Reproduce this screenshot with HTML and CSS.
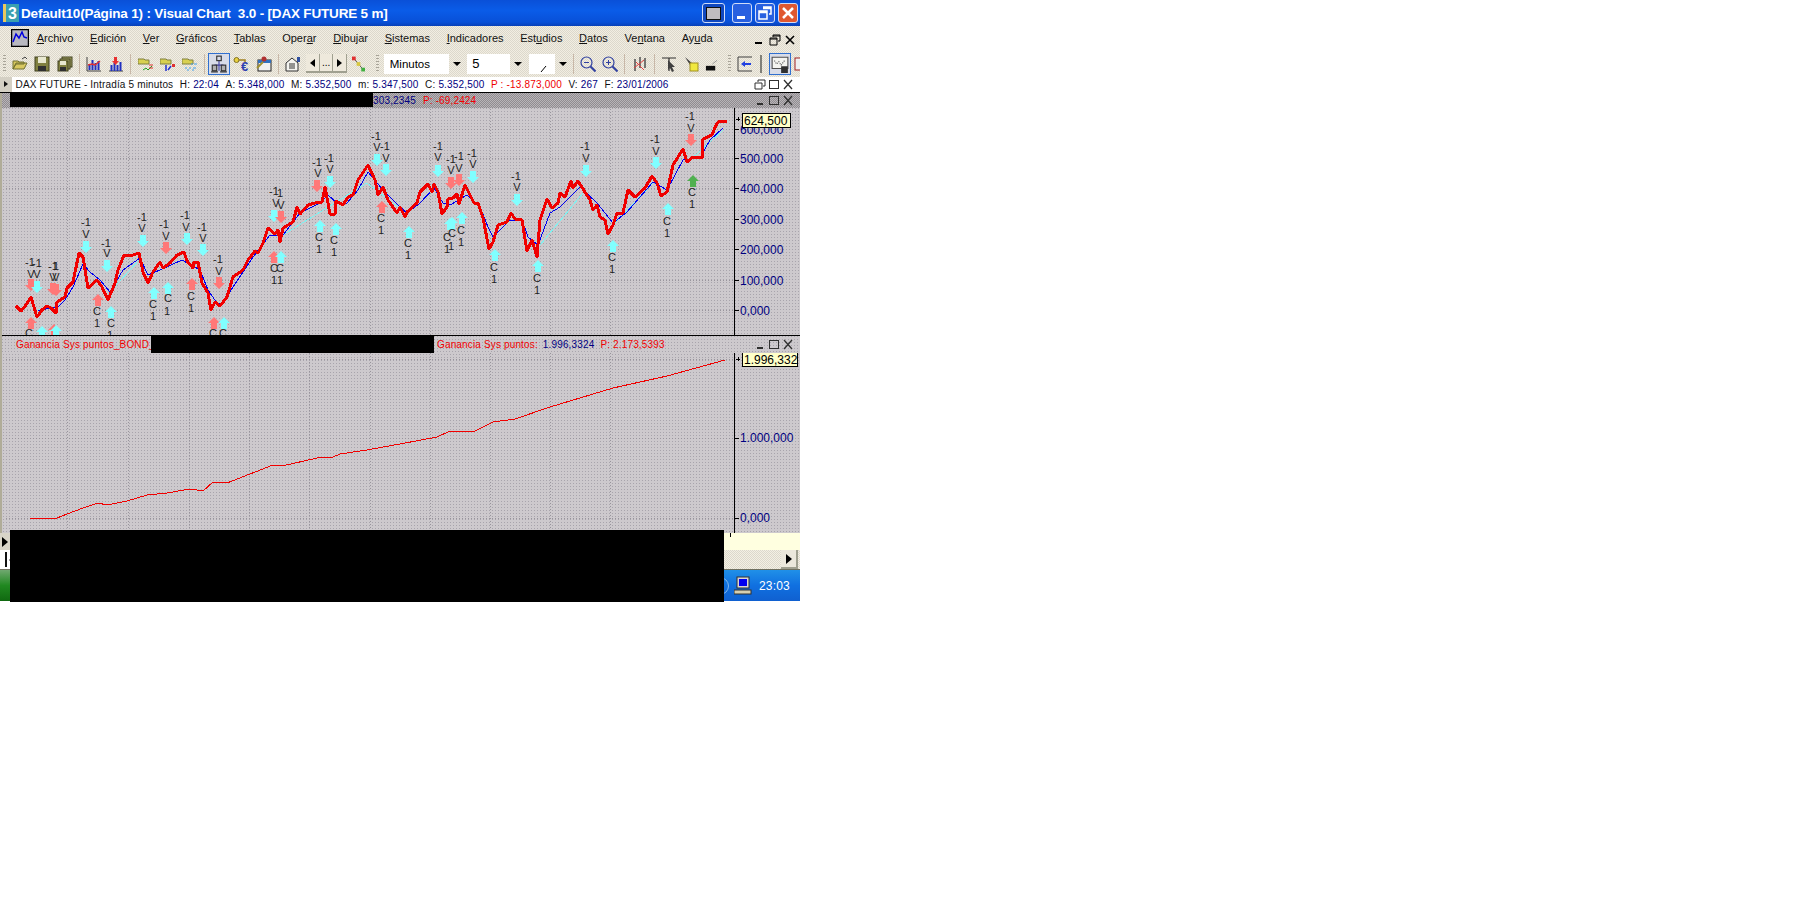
FILE: index.html
```html
<!DOCTYPE html>
<html lang="es">
<head>
<meta charset="utf-8">
<title>Visual Chart</title>
<link rel="stylesheet" href="styles.css">
</head>
<body>
<div class="app">
  <header class="titlebar">
    <svg class="appicon" width="18" height="20" viewBox="0 0 18 20"><rect x="1" y="1" width="16" height="18" fill="#3aa0b0"/><path d="M1 1h3v18H1z" fill="#e8c860"/><text x="6" y="16" class="appnum">3</text></svg>
    <span class="titletext">Default10(Página 1) : Visual Chart  3.0 - [DAX FUTURE 5 m]</span>
    <div class="winbtns">
      <span class="winbtn extra"><i class="extra-in"></i></span>
      <span class="winbtn"><svg width="20" height="20" viewBox="0 0 20 20"><rect x="5" y="13" width="8" height="3" fill="#fff"/></svg></span>
      <span class="winbtn"><svg width="20" height="20" viewBox="0 0 20 20"><path d="M8 4h8v7h-2M4 8h8v8H4zM4 9.500h8M8 5.500h8" fill="none" stroke="#fff" stroke-width="1.500"/></svg></span>
      <span class="winbtn close"><svg width="20" height="20" viewBox="0 0 20 20"><path d="M5 5l10 10M15 5L5 15" stroke="#fff" stroke-width="2.500"/></svg></span>
    </div>
  </header>

  <nav class="menubar">
    <svg class="docicon" width="18" height="18" viewBox="0 0 18 18"><rect x="0.500" y="0.500" width="17" height="17" fill="#b8b8c0" stroke="#000" stroke-width="1.500"/><path d="M2 13l3-8 3 4 3-6 2 5 3 1" fill="none" stroke="#0000e0" stroke-width="1.500"/></svg>
    <span class="mi"><u>A</u>rchivo</span>
    <span class="mi"><u>E</u>dición</span>
    <span class="mi"><u>V</u>er</span>
    <span class="mi"><u>G</u>ráficos</span>
    <span class="mi"><u>T</u>ablas</span>
    <span class="mi">Oper<u>a</u>r</span>
    <span class="mi"><u>D</u>ibujar</span>
    <span class="mi"><u>S</u>istemas</span>
    <span class="mi"><u>I</u>ndicadores</span>
    <span class="mi">Est<u>u</u>dios</span>
    <span class="mi"><u>D</u>atos</span>
    <span class="mi">Ve<u>n</u>tana</span>
    <span class="mi">Ay<u>u</u>da</span>
    <div class="mdibtns">
      <svg width="12" height="12" viewBox="0 0 12 12"><rect x="1" y="8" width="7" height="2"/></svg>
      <svg width="12" height="12" viewBox="0 0 12 12"><path d="M4 3V1h7v6H9M1 4h7v7H1zM1 5h7M4 2h7" fill="none" stroke="#000"/></svg>
      <svg width="12" height="12" viewBox="0 0 12 12"><path d="M2 2l8 8M10 2l-8 8" stroke="#000" stroke-width="1.600"/></svg>
    </div>
  </nav>

  <div class="toolbar">
    <i class="grip"></i>
    <svg class="ti" viewBox="0 0 16 16"><path d="M1 13V5h5l1 1h5v2H4l-3 5zM1 13l3-6h11l-3 6z" fill="#d8c860" stroke="#707030"/><path d="M10 3l3-2 2 2" fill="none" stroke="#404040"/></svg>
    <svg class="ti" viewBox="0 0 16 16"><rect x="1" y="1" width="14" height="14" fill="#808040" stroke="#404020"/><rect x="4" y="1" width="8" height="6" fill="#e8e8d0"/><rect x="4" y="10" width="8" height="5" fill="#303030"/></svg>
    <svg class="ti" viewBox="0 0 16 16"><rect x="5" y="1" width="10" height="10" fill="#a0a060" stroke="#404020"/><rect x="3" y="3" width="10" height="10" fill="#a0a060" stroke="#404020"/><rect x="1" y="5" width="10" height="10" fill="#808040" stroke="#404020"/><rect x="3" y="5" width="6" height="4" fill="#e8e8d0"/><rect x="3" y="11" width="6" height="4" fill="#303030"/></svg>
    <i class="sep"></i>
    <svg class="ti" viewBox="0 0 16 16"><path d="M1 1v14h14" fill="none" stroke="#404040"/><path d="M3.500 8v6M6.500 4v10M9.500 7v7M12.500 5v9" stroke="#2030c0" stroke-width="2"/><path d="M2 9l4-1 3 1 5-4" fill="none" stroke="#e03030" stroke-width="1.500"/></svg>
    <svg class="ti" viewBox="0 0 16 16"><path d="M1 15h14" stroke="#404040"/><path d="M3.500 9v6M6.500 7v8M9.500 9v6M12.500 6v9" stroke="#2030c0" stroke-width="2"/><path d="M6 1h3v4h2L7.500 9 4 5h2z" fill="#e83030"/></svg>
    <i class="sep"></i>
    <svg class="ti" viewBox="0 0 16 16"><path d="M0 3h6l1 1h4v4H0z" fill="#d8d050" stroke="#808040"/><path d="M5 14l3-2 2 2 4-4" fill="none" stroke="#20a020"/><path d="M11 9h4M11 12h4" stroke="#e03030"/></svg>
    <svg class="ti" viewBox="0 0 16 16"><path d="M0 3h6l1 1h4v4H0z" fill="#d8d050" stroke="#808040"/><path d="M6 9v6M11 10l-3 4" stroke="#2030d0" stroke-width="1.500"/><path d="M12 8h3v3h-3z" fill="#e03030"/></svg>
    <svg class="ti" viewBox="0 0 16 16"><path d="M0 3h6l1 1h4v4H0z" fill="#d8d050" stroke="#808040"/><path d="M3 12h2M7 12h2M11 12h3M9 8h2M12 8h3M5 14h2M10 14h2" stroke="#40a0f0"/></svg>
    <i class="sep"></i>
    <span class="tactive"><svg class="ti" viewBox="0 0 16 16"><path d="M8 5v9M4 9v4M12 9v4M4 9h8" stroke="#4040a0" fill="none"/><rect x="6" y="1" width="4" height="4" fill="none" stroke="#303030"/><rect x="2" y="9" width="4" height="5" fill="#b0b0b0" stroke="#303030"/><rect x="10" y="9" width="4" height="5" fill="#b0b0b0" stroke="#303030"/><path d="M1 15h6M9 15h6" stroke="#303030"/></svg></span>
    <svg class="ti" viewBox="0 0 16 16"><circle cx="3.500" cy="4" r="2.500" fill="#e8d040" stroke="#807020"/><path d="M6 4h6v2" stroke="#a08020" fill="none" stroke-width="1.500"/><text x="8" y="15" class="euro">€</text></svg>
    <svg class="ti" viewBox="0 0 16 16"><rect x="2" y="4" width="13" height="11" fill="#f0f0f0" stroke="#202020"/><rect x="2" y="4" width="13" height="3" fill="#3070c0"/><circle cx="8" cy="3" r="2.500" fill="#b03030"/><path d="M1 12l6-6" stroke="#a09030" stroke-width="2"/></svg>
    <i class="sep"></i>
    <svg class="ti" viewBox="0 0 16 16"><path d="M1 7l6-5 6 5v8H1z" fill="#f4f4f0" stroke="#303030"/><path d="M4 8h6M4 10h6M4 12h6" stroke="#303030"/><path d="M12 1h3v5h-3z" fill="#3050a0"/></svg>
    <div class="navgroup"><span class="navb"><i class="tri-l"></i></span><span class="navb mid">...</span><span class="navb"><i class="tri-r"></i></span></div>
    <svg class="ti small" viewBox="0 0 14 16"><path d="M2 2l10 12" stroke="#505050"/><rect x="0" y="0" width="4" height="4" fill="#e03030"/><rect x="5" y="6" width="4" height="4" fill="#d8c840"/><rect x="10" y="12" width="4" height="4" fill="#40b040"/></svg>
    <i class="grip late"></i>
    <div class="combo wide"><span>Minutos</span></div><i class="drop"></i>
    <div class="combo mid5"><span>5</span></div><i class="drop"></i>
    <div class="combo line"><svg width="10" height="10" viewBox="0 0 10 10"><path d="M1 9l5-6" stroke="#000"/></svg></div><i class="drop"></i>
    <i class="sep"></i>
    <svg class="ti" viewBox="0 0 16 16"><circle cx="6.500" cy="6.500" r="5.500" fill="none" stroke="#3040a0" stroke-width="1.200"/><path d="M4 6.500h5" stroke="#3040a0"/><path d="M10.500 10.500l5 5" stroke="#3040a0" stroke-width="2"/></svg>
    <svg class="ti" viewBox="0 0 16 16"><circle cx="6.500" cy="6.500" r="5.500" fill="none" stroke="#3040a0" stroke-width="1.200"/><path d="M4 6.500h5M6.500 4v5" stroke="#3040a0"/><path d="M10.500 10.500l5 5" stroke="#3040a0" stroke-width="2"/></svg>
    <i class="sep"></i>
    <svg class="ti" viewBox="0 0 16 16"><path d="M3 3v12M8 1v11M13 2v10" stroke="#505050" stroke-width="1.500"/><path d="M2 12l10-8M4 6l8 8" stroke="#e04040"/></svg>
    <i class="sep"></i>
    <svg class="ti" viewBox="0 0 16 16"><path d="M1 2h14M8 2v13" stroke="#303030" stroke-width="1.200"/><path d="M7 4l7 7-3 0 2 4-2 1-2-4-2 2z" fill="#404040"/></svg>
    <svg class="ti" viewBox="0 0 16 16"><path d="M2 1l8 7-3 1z" fill="#404040"/><rect x="7" y="7" width="8" height="8" fill="#f0e840" stroke="#a09020"/></svg>
    <svg class="ti small" viewBox="0 0 14 16"><rect x="1" y="10" width="10" height="5" fill="#101010"/><path d="M8 8l5-4" stroke="#909090"/></svg>
    <i class="grip short"></i>
    <svg class="ti" viewBox="0 0 16 16"><path d="M15 1H1v14h14" fill="none" stroke="#404040"/><path d="M4 8l4-3v2h6v2H8v2z" fill="#2040e0"/></svg>
    <i class="vbar"></i>
    <span class="tactive late-active"><svg class="ti" viewBox="0 0 16 16"><path d="M1 2h14v10H1z" fill="#f4f4f0" stroke="#505050"/><path d="M3 5l2 3 2-2 2 3 3-4" fill="none" stroke="#606060" stroke-dasharray="1 1"/><rect x="9" y="10" width="6" height="6" fill="#303030"/></svg></span>
    <svg class="ti cut" viewBox="0 0 16 16"><rect x="1" y="2" width="14" height="12" fill="#f0f0f0" stroke="#a02020"/></svg>
  </div>

  <div class="infobar">
    <span class="infotri"></span>
    <span class="in-name">DAX FUTURE - Intradía 5 minutos</span>
    <span>H: <b>22:04</b></span>
    <span>A: <b>5.348,000</b></span>
    <span>M: <b>5.352,500</b></span>
    <span>m: <b>5.347,500</b></span>
    <span>C: <b>5.352,500</b></span>
    <span class="red">P : -13.873,000</span>
    <span>V: <b>267</b></span>
    <span>F: <b>23/01/2006</b></span>
    <div class="panelbtns first">
      <svg width="12" height="11" viewBox="0 0 12 11"><path d="M4 3V1h7v6H9M1 4h7v6H1z" fill="none" stroke="#303030"/></svg>
      <svg width="12" height="11" viewBox="0 0 12 11"><rect x="1.500" y="1.500" width="9" height="8" fill="none" stroke="#303030"/></svg>
      <svg width="12" height="11" viewBox="0 0 12 11"><path d="M2 1l8 9M10 1l-8 9" stroke="#303030" stroke-width="1.300"/></svg>
    </div>
  </div>

  <section class="panel">
    <div class="panelhead dark">
      <span class="ph-a navy">303,2345</span><span class="red">P: -69,2424</span>
      <div class="panelbtns">
        <svg width="12" height="11" viewBox="0 0 12 11"><rect x="3" y="8" width="6" height="2" fill="#303030"/></svg>
        <svg width="12" height="11" viewBox="0 0 12 11"><rect x="1.500" y="1.500" width="9" height="8" fill="none" stroke="#303030"/></svg>
        <svg width="12" height="11" viewBox="0 0 12 11"><path d="M2 1l8 9M10 1l-8 9" stroke="#303030" stroke-width="1.300"/></svg>
      </div>
    </div>
    <svg class="chart c1" width="798" height="227" viewBox="2 108 798 227">
      <defs>
        <pattern id="dots" width="3" height="3" patternUnits="userSpaceOnUse"><rect width="3" height="3" fill="#cdc9cd"/><rect width="1" height="1" fill="#a8a4ac"/></pattern>
        <path id="up" d="M0-6 6 0H3V6H-3V0H-6Z"/>
        <path id="dn" d="M0 6 6 0H3V-6H-3V0H-6Z"/>
      </defs>
      <rect x="2" y="108" width="798" height="227" fill="url(#dots)"/>
      <path class="grid" d="M67 109V335M128 109V335M189 109V335M249 109V335M309 109V335M370 109V335M430 109V335M490 109V335M550 109V335M610 109V335M6 129H734M6 158H734M6 188H734M6 219H734M6 249H734M6 280H734M6 310H734"/>
      <path class="axis" d="M734 108V335M734 129H739M734 158H739M734 188H739M734 219H739M734 249H739M734 280H739M734 310H739"/>
      <g class="ax">
        <text x="740" y="134">600,000</text><text x="740" y="163">500,000</text><text x="740" y="193">400,000</text><text x="740" y="224">300,000</text><text x="740" y="254">200,000</text><text x="740" y="285">100,000</text><text x="740" y="315">0,000</text>
      </g>
      <path class="cy-line" d="M38 310L55 307M110 292L140 259M283 235L367 183 398 207M540 245L583 193M613 225L653 183M687 163L723 130"/>
      <polyline class="bl-line" points="38,311 50,308 58,307 65,300 73,287 83,264 90,272 100,280 110,292 123,270 140,258 148,275 160,270 182,260 200,270 208,290 217,303 223,303 233,287 253,257 270,235 283,235 300,213 320,203 328,195 337,203 347,203 358,190 368,172 383,190 400,207 407,213 420,203 434,188 443,203 450,205 467,195 480,207 488,227 493,237 510,220 522,220 528,237 538,245 550,213 560,207 580,187 597,203 613,223 627,212 653,182 667,190 683,160 700,158 710,140 723,128"/>
      <polyline class="rd-line" points="16,306 21,311 26,305 31,297 37,317 42,310 47,306 51,308 56,313 57,302 65,297 67,288 73,282 79,253 83,257 88,288 97,280 102,287 108,300 115,283 118,270 124,255 133,255 139,253 143,272 148,283 153,272 160,262 163,268 170,263 177,255 184,252 187,261 193,268 194,262 198,262 202,283 208,293 211,310 215,302 220,306 227,297 233,277 243,270 248,260 255,251 258,253 263,243 268,228 275,234 278,230 280,242 283,228 293,222 297,207 300,214 308,205 315,203 322,202 325,187 330,214 335,214 336,201 343,205 348,197 353,195 358,180 368,165 375,180 378,195 383,187 388,200 397,213 400,207 405,217 407,212 417,203 420,192 428,184 432,192 434,184 438,192 442,214 447,207 448,199 453,198 457,194 459,204 465,185 474,203 478,203 483,218 489,249 493,242 498,225 507,222 511,213 515,219 522,220 527,251 532,240 537,257 540,220 547,199 552,208 558,203 560,193 565,197 571,181 573,188 578,181 590,200 593,210 597,205 600,217 605,220 608,234 613,225 617,213 623,213 628,190 635,197 645,188 652,176 657,183 661,196 667,192 673,165 683,149 687,162 693,157 702,158 703,139 712,135 717,123 720,121 727,121"/>
      <g class="sig">
        <use href="#dn" x="31" y="285" class="pk"/><text x="30" y="266">-1</text><text x="31" y="278">V</text>
        <use href="#dn" x="37" y="287" class="cy"/><text x="37" y="267">-1</text><text x="37" y="278">V</text>
        <use href="#dn" x="53" y="289" class="pk"/><use href="#dn" x="56" y="290" class="pk"/><text x="53" y="270">-1</text><text x="56" y="270">1</text><text x="53" y="281">V</text><text x="56" y="281">V</text>
        <use href="#dn" x="86" y="247" class="cy"/><text x="86" y="226">-1</text><text x="86" y="238">V</text>
        <use href="#dn" x="107" y="266" class="cy"/><text x="106" y="247">-1</text><text x="107" y="257">V</text>
        <use href="#dn" x="143" y="241" class="cy"/><text x="142" y="221">-1</text><text x="142" y="232">V</text>
        <use href="#dn" x="166" y="248" class="pk"/><text x="164" y="228">-1</text><text x="166" y="240">V</text>
        <use href="#dn" x="187" y="239" class="cy"/><text x="185" y="219">-1</text><text x="186" y="231">V</text>
        <use href="#dn" x="203" y="250" class="cy"/><text x="202" y="231">-1</text><text x="203" y="242">V</text>
        <use href="#dn" x="219" y="283" class="pk"/><text x="218" y="263">-1</text><text x="219" y="275">V</text>
        <use href="#dn" x="274" y="216" class="cy"/><text x="274" y="195">-1</text><text x="276" y="207">V</text>
        <use href="#dn" x="281" y="217" class="pk"/><text x="280" y="197">1</text><text x="281" y="209">V</text>
        <use href="#dn" x="317" y="186" class="pk"/><text x="317" y="166">-1</text><text x="318" y="177">V</text>
        <use href="#dn" x="330" y="182" class="cy"/><text x="329" y="162">-1</text><text x="330" y="173">V</text>
        <use href="#dn" x="377" y="160" class="cy"/><text x="376" y="140">-1</text><text x="377" y="151">V</text>
        <use href="#dn" x="386" y="170" class="cy"/><text x="385" y="150">-1</text><text x="386" y="162">V</text>
        <use href="#dn" x="438" y="171" class="cy"/><text x="438" y="150">-1</text><text x="438" y="161">V</text>
        <use href="#dn" x="451" y="183" class="pk"/><text x="451" y="163">-1</text><text x="451" y="174">V</text>
        <use href="#dn" x="459" y="180" class="pk"/><text x="459" y="160">-1</text><text x="459" y="172">V</text>
        <use href="#dn" x="473" y="177" class="cy"/><text x="472" y="157">-1</text><text x="473" y="168">V</text>
        <use href="#dn" x="517" y="200" class="cy"/><text x="516" y="180">-1</text><text x="517" y="191">V</text>
        <use href="#dn" x="586" y="171" class="cy"/><text x="585" y="150">-1</text><text x="586" y="162">V</text>
        <use href="#dn" x="656" y="163" class="cy"/><text x="655" y="143">-1</text><text x="656" y="155">V</text>
        <use href="#dn" x="691" y="140" class="pk"/><text x="690" y="120">-1</text><text x="691" y="132">V</text>

        <use href="#up" x="31" y="323" class="pk"/><text x="29" y="337">C</text>
        <use href="#up" x="42" y="332" class="cy"/>
        <use href="#up" x="54" y="330" class="pk"/><use href="#up" x="56" y="331" class="cy"/>
        <use href="#up" x="98" y="300" class="pk"/><text x="97" y="315">C</text><text x="97" y="327">1</text>
        <use href="#up" x="111" y="312" class="cy"/><text x="111" y="327">C</text><text x="110" y="339">1</text>
        <use href="#up" x="154" y="293" class="cy"/><text x="153" y="308">C</text><text x="153" y="320">1</text>
        <use href="#up" x="168" y="288" class="cy"/><text x="168" y="302">C</text><text x="167" y="315">1</text>
        <use href="#up" x="192" y="284" class="pk"/><text x="191" y="300">C</text><text x="191" y="312">1</text>
        <use href="#up" x="214" y="323" class="pk"/><text x="213" y="337">C</text>
        <use href="#up" x="224" y="323" class="cy"/><text x="223" y="337">C</text>
        <use href="#up" x="274" y="257" class="pk"/><text x="274" y="272">C</text><text x="274" y="284">1</text>
        <use href="#up" x="281" y="257" class="cy"/><text x="280" y="272">C</text><text x="280" y="284">1</text>
        <use href="#up" x="320" y="226" class="cy"/><text x="319" y="241">C</text><text x="319" y="253">1</text>
        <use href="#up" x="336" y="229" class="cy"/><text x="334" y="244">C</text><text x="334" y="256">1</text>
        <use href="#up" x="382" y="207" class="pk"/><text x="381" y="222">C</text><text x="381" y="234">1</text>
        <use href="#up" x="409" y="232" class="cy"/><text x="408" y="247">C</text><text x="408" y="259">1</text>
        <use href="#up" x="450" y="224" class="cy"/><text x="447" y="241">C</text><text x="447" y="253">1</text>
        <use href="#up" x="452" y="223" class="cy"/><text x="452" y="237">C</text><text x="451" y="250">1</text>
        <use href="#up" x="462" y="218" class="cy"/><text x="461" y="234">C</text><text x="461" y="246">1</text>
        <use href="#up" x="495" y="255" class="cy"/><text x="494" y="271">C</text><text x="494" y="283">1</text>
        <use href="#up" x="538" y="266" class="cy"/><text x="537" y="282">C</text><text x="537" y="294">1</text>
        <use href="#up" x="613" y="246" class="cy"/><text x="612" y="261">C</text><text x="612" y="273">1</text>
        <use href="#up" x="668" y="209" class="cy"/><text x="667" y="225">C</text><text x="667" y="237">1</text>
        <use href="#up" x="693" y="181" class="gr"/><text x="692" y="196">C</text><text x="692" y="208">1</text>
      </g>
      <path class="axis" d="M736 119h4M738 117v4"/>
      <rect class="tip" x="742.500" y="113.500" width="48" height="14"/>
      <text class="tiptext" x="744" y="125">624,500</text>
    </svg>
  </section>

  <section class="panel">
    <div class="panelhead light">
      <span class="red ph-b">Ganancia Sys puntos_BOND_</span>
      <span class="red ph-c">Ganancia Sys puntos:</span><span class="navy ph-d">1.996,3324</span><span class="red">P: 2.173,5393</span>
      <div class="panelbtns">
        <svg width="12" height="11" viewBox="0 0 12 11"><rect x="3" y="8" width="6" height="2" fill="#303030"/></svg>
        <svg width="12" height="11" viewBox="0 0 12 11"><rect x="1.500" y="1.500" width="9" height="8" fill="none" stroke="#303030"/></svg>
        <svg width="12" height="11" viewBox="0 0 12 11"><path d="M2 1l8 9M10 1l-8 9" stroke="#303030" stroke-width="1.300"/></svg>
      </div>
    </div>
    <svg class="chart c2" width="798" height="180" viewBox="2 353 798 180">
      <rect x="2" y="353" width="798" height="180" fill="url(#dots)"/>
      <path class="grid" d="M67 353V533M128 353V533M189 353V533M249 353V533M309 353V533M370 353V533M430 353V533M490 353V533M550 353V533M610 353V533M6 359H734M6 438H734M6 518H734"/>
      <path class="axis" d="M734 353V533M734 438H739M734 518H739"/>
      <g class="ax">
        <text x="740" y="442">1.000,000</text><text x="740" y="522">0,000</text>
      </g>
      <polyline class="rd-thin" points="30,518 35,519 40,518 57,518 67,514 83,508 98,503 107,505 127,501 147,495 167,493 190,489 203,491 213,482 227,483 250,474 273,465 282,466 317,458 333,457 340,454 367,450 383,447 400,444 437,437 448,432 458,431 473,432 493,422 515,419 550,407 613,388 667,376 725,360"/>
      <path class="axis" d="M736 359h4M738 357v4"/>
      <rect class="tip" x="742.500" y="352.500" width="55" height="14"/>
      <text class="tiptext" x="744" y="364">1.996,332</text>
    </svg>
  </section>

  <div class="yellowrow"><span class="smallbtn"><i class="tri-r big"></i></span><i class="ytick"></i></div>
  <div class="scrollrow"><span class="scr-left"><i class="vbar dark"></i><i class="tri-l"></i></span><span class="scr-track"></span><span class="scr-right"><i class="tri-r big"></i></span></div>
  <footer class="taskbar">
    <span class="startpart"></span>
    <div class="tray">
      <span class="chev">«</span>
      <svg width="18" height="20" viewBox="0 0 18 20"><rect x="3" y="1" width="12" height="11" fill="#d8d8d8" stroke="#303030"/><rect x="5" y="3" width="8" height="7" fill="#0000f0"/><rect x="0" y="14" width="17" height="4" fill="#d8d0b0" stroke="#303030"/></svg>
      <span class="clock">23:03</span>
    </div>
  </footer>

  <div class="redact r1"></div>
  <div class="redact r2"></div>
  <div class="redact r3"></div>
</div>
</body>
</html>
```

FILE: styles.css
```css
html, body { margin: 0; padding: 0; background: #fff; }
body { height: 900px; overflow: hidden; font-family: "Liberation Sans", Arial, sans-serif; }
.app { position: relative; width: 800px; height: 602px; display: flex; flex-direction: column; overflow: hidden; }

.titlebar { height: 26px; flex: none; display: flex; align-items: center; padding-left: 2px; box-sizing: border-box;
  background: linear-gradient(#0a50d8, #0a5ce8 40%, #0850d8 85%, #0840b8); color: #fff; }
.appicon { margin-right: 1px; flex: none; }
.appnum { font: bold 16px "Liberation Sans", sans-serif; fill: #fff; }
.titletext { font-weight: bold; font-size: 13.500px; letter-spacing: -.18px; white-space: pre; }
.winbtns { margin-left: auto; display: flex; gap: 3px; padding-right: 2px; }
.winbtn { width: 20px; height: 20px; border: 1px solid #d0dcf8; border-radius: 3px; background: #2860e0; display: flex; align-items: center; justify-content: center; box-sizing: border-box; }
.winbtn svg { flex: none; }
.winbtn.extra { width: 23px; margin-right: 4px; background: #1048c0; }
.extra-in { width: 13px; height: 11px; background: #c0bcc0; border: 1px solid #101010; display: block; }
.winbtn.close { background: #e05830; }

.menubar { height: 24px; flex: none; display: flex; align-items: center; padding-left: 11px; box-sizing: border-box;
  background: repeating-conic-gradient(#f2eee2 0 25%, #dcd8cc 0 50%) 0 0 / 2px 2px; font-size: 11px; color: #111; gap: 16.700px; }
.docicon { margin-right: -9px; flex: none; }
.mi { white-space: nowrap; }
.mdibtns { margin-left: auto; display: flex; gap: 3px; padding-right: 4px; margin-top: 3px; }

.toolbar { height: 27px; flex: none; display: flex; align-items: center; gap: 6.200px; padding-left: 3px; box-sizing: border-box; overflow: hidden;
  background: repeating-conic-gradient(#f2eee2 0 25%, #dcd8cc 0 50%) 0 0 / 2px 2px; }
.grip { width: 3px; height: 18px; flex: none; background: repeating-linear-gradient(#a8a498 0 1px, transparent 1px 3px); }
.grip.late { margin-left: 4px; }
.grip.short { margin-left: 3px; }
.ti { width: 16px; height: 16px; flex: none; display: block; }
.ti.small { width: 13px; }
.ti.cut { margin-left: -3px; }
.sep { width: 1px; height: 20px; flex: none; background: #c8b8a8; }
.tactive { width: 18px; height: 18px; padding: 1px; flex: none; border: 1px solid #3070d0; background: #d8dce8; margin: 0 -3px; }
.tactive .ti { width: 18px; height: 18px; }
.tactive.late-active { margin: 0; }
.navgroup { display: flex; margin: 0 -1px; }
.navb { height: 17px; width: 13px; display: flex; align-items: center; justify-content: center; font-size: 10px; line-height: 1; border-bottom: 2px solid #a0a090; border-right: 1px solid #a0a090; background: #eee9dc; }
.navb.mid { width: 12px; }
.tri-l { width: 0; height: 0; border: 4px solid transparent; border-left: 0; border-right: 5px solid #000; display: block; flex: none; }
.tri-r { width: 0; height: 0; border: 4px solid transparent; border-right: 0; border-left: 5px solid #000; display: block; flex: none; }
.tri-r.big { border-width: 5px 0 5px 6px; border-color: transparent transparent transparent #000; }
.combo { height: 20px; background: #fff; display: flex; align-items: center; flex: none; font-size: 11.500px; box-sizing: border-box; }
.combo.wide { width: 65px; padding-left: 6px; margin-left: -1px; }
.combo.mid5 { width: 43px; padding-left: 5px; font-size: 13px; }
.combo.line { width: 26px; padding: 8px 0 0 11px; }
.drop { width: 0; height: 0; flex: none; border: 4px solid transparent; border-bottom: 0; border-top: 4px solid #000; margin-left: -2px; }

.infobar { height: 16px; flex: none; display: flex; align-items: center; gap: 6.500px; background: #fff; border-bottom: 1px solid #000; box-sizing: border-box; font-size: 10px; letter-spacing: .18px; color: #111; white-space: nowrap; }
.infobar b { font-weight: normal; color: #000080; }
.infotri { width: 12px; height: 15px; margin-right: -3px; flex: none; background: #d4d0c4; position: relative; }
.infotri::after { content: ""; display: block; width: 0; height: 0; margin: 4px 0 0 4px; border: 3px solid transparent; border-right: 0; border-left: 4px solid #111; }
.in-name { letter-spacing: .16px; }
.red { color: #f00000; }
.navy { color: #000080; }
.panelbtns { margin-left: auto; display: flex; gap: 2px; padding-right: 6px; }

.panel { flex: none; display: flex; flex-direction: column; border-left: 2px solid #b0ac98; box-sizing: border-box; }
.panel svg.chart { display: block; flex: none; }
.panelhead { height: 15px; flex: none; display: flex; align-items: center; font-size: 10px; letter-spacing: .15px; white-space: nowrap; }
.panelhead.dark { background: repeating-conic-gradient(#b8b4b8 0 25%, #908c90 0 50%) 0 0 / 2px 2px; }
.panelhead.light { height: 18px; border-top: 1px solid #000; box-sizing: border-box; background: conic-gradient(at 1px 1px, #cdc9cd 75%, #a8a4ac 0) 0 0 / 3px 3px; }
.ph-a { margin-left: 371px; margin-right: 7px; }
.ph-b { margin-left: 14px; width: 421px; flex: none; }
.ph-c { margin-right: 5px; }
.ph-d { margin-right: 6px; }

.grid { fill: none; stroke: #98949c; stroke-dasharray: 1 2; stroke-width: 1; shape-rendering: crispEdges; }
.axis { fill: none; stroke: #000; stroke-width: 1; shape-rendering: crispEdges; }
.ax text { font: 12px "Liberation Sans", sans-serif; fill: #000080; }
.cy-line { fill: none; stroke: #80f0f0; stroke-width: 1; shape-rendering: crispEdges; }
.bl-line { fill: none; stroke: #0000f0; stroke-width: 1; shape-rendering: crispEdges; }
.rd-line { fill: none; stroke: #f00000; stroke-width: 3; stroke-linejoin: round; shape-rendering: crispEdges; }
.rd-thin { fill: none; stroke: #f00000; stroke-width: 1; shape-rendering: crispEdges; }
.sig text { font: 11px "Liberation Sans", sans-serif; fill: #222; text-anchor: middle; }
.cy { fill: #80ffff; }
.pk { fill: #ff7878; }
.gr { fill: #50b050; }
.tip { fill: #ffffc8; stroke: #000; stroke-width: 1; }
.tiptext { font: 12px "Liberation Sans", sans-serif; fill: #000; }
.euro { font: bold 13px "Liberation Sans", sans-serif; fill: #3040b0; }

.yellowrow { height: 17px; flex: none; display: flex; background: #ffffe0; position: relative; }
.smallbtn { width: 10px; background: #d8d4c8; display: flex; align-items: center; justify-content: center; }
.ytick { width: 1px; height: 4px; background: #000; margin-left: 720px; }
.scrollrow { height: 20px; flex: none; display: flex; background: repeating-conic-gradient(#f4f0e4 0 25%, #dcd8cc 0 50%) 0 0 / 2px 2px; border-bottom: 1px solid #707060; box-sizing: border-box; padding-right: 2px; }
.scr-left { width: 12px; display: flex; align-items: center; gap: 2px; background: #fff; }
.vbar { width: 2px; height: 18px; flex: none; background: #808078; margin: 0 1px; }
.vbar.dark { background: #111; height: 15px; margin: 0 0 0 5px; }
.scr-track { flex: 1; }
.scr-right { width: 17px; background: #ece8dc; border-right: 2px solid #a0a090; border-bottom: 2px solid #a0a090; display: flex; align-items: center; justify-content: center; box-sizing: border-box; }

.taskbar { height: 31px; flex: none; display: flex; align-items: stretch; background: linear-gradient(#2090e8, #1070e0 50%, #1060d0); }
.startpart { width: 10px; background: linear-gradient(#70a870, #208820 50%, #106810); }
.tray { margin-left: auto; display: flex; align-items: center; gap: 5px; padding-right: 10px; color: #fff; font-size: 12px; letter-spacing: .2px; }
.chev { width: 18px; height: 18px; border-radius: 50%; border: 1px solid #80b8f0; box-sizing: border-box; display: flex; align-items: center; justify-content: center; font-weight: bold; font-size: 14px; line-height: 1; }
.clock { margin-left: 2px; }

.redact { position: absolute; background: #000; }
.r1 { left: 10px; top: 93px; width: 363px; height: 14px; }
.r2 { left: 151px; top: 335px; width: 283px; height: 18px; }
.r3 { left: 10px; top: 530px; width: 714px; height: 72px; }
```
